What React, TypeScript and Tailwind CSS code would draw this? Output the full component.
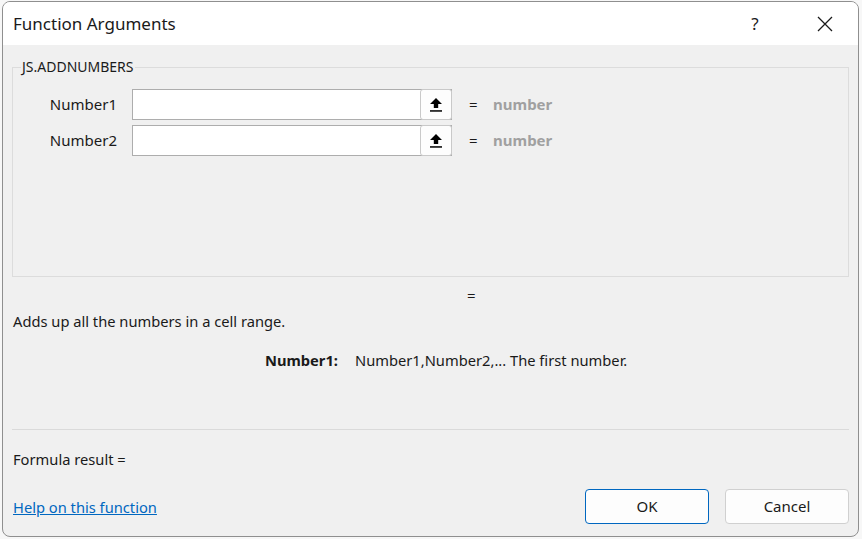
import React from 'react'

const font = { fontFamily: '"Segoe UI", "Noto Sans", Arial, sans-serif' }

function RefIcon() {
  return (
    <svg width="12" height="14" viewBox="0 0 12 14">
      <polygon points="6,0 12,6 8.2,6 8.2,10 3.8,10 3.8,6 0,6" fill="#000" />
      <rect x="0" y="12.2" width="12" height="1.5" fill="#000" />
    </svg>
  )
}

function ArgRow({ label }: { label: string }) {
  return (
    <div className="flex items-center h-[31px]">
      <div className="w-[119px] pr-[15px] text-right text-[15px] text-[#1a1a1a]">{label}</div>
      <div className="flex w-[320px] h-full border border-[#adadad] bg-white">
        <div className="flex-1" />
        <button className="w-[32px] h-[calc(100%+2px)] -mt-[1px] -mr-[1px] rounded-[3px] border border-[#c9c9c9] bg-[#fdfdfd] flex items-center justify-center">
          <RefIcon />
        </button>
      </div>
      <span className="ml-[17px] w-[8px] text-[15px] text-[#1a1a1a]">=</span>
      <span className="ml-[16px] text-[15px] font-bold text-[#a0a0a0]">number</span>
    </div>
  )
}

export default function App() {
  return (
    <div className="w-[862px] h-[539px] bg-[#f7f7f7] pt-[1px] pl-[2px]" style={font}>
      <div className="w-[857px] h-[536px] rounded-[8px] border border-[#8f8f8f] overflow-hidden flex flex-col bg-[#f0f0f0]">
        {/* title bar */}
        <div className="h-[43px] bg-white flex items-center pl-[10px] shrink-0">
          <span className="text-[17px] text-[#1a1a1a] flex-1">Function Arguments</span>
          <span className="w-[46px] text-center text-[17px] text-[#1a1a1a]">?</span>
          <span className="w-[46px] ml-[24px] mr-[10px] flex items-center justify-center">
            <svg width="16" height="16" viewBox="0 0 16 16">
              <path d="M1 1 L15 15 M15 1 L1 15" stroke="#1a1a1a" strokeWidth="1.3" />
            </svg>
          </span>
        </div>

        {/* body */}
        <div className="flex-1 flex flex-col px-[9px]">
          <fieldset className="mt-[12px] h-[220px] border border-[#dcdcdc] px-0">
            <legend className="ml-[8px] px-[1px] text-[14px] leading-[20px] text-[#1a1a1a]">JS.ADDNUMBERS</legend>
            <div className="mt-[12px] flex flex-col gap-[5px]">
              <ArgRow label="Number1" />
              <ArgRow label="Number2" />
            </div>
          </fieldset>

          <div className="h-[36px] flex items-center">
            <span className="ml-[455px] text-[15px] text-[#1a1a1a]">=</span>
          </div>
          <div className="-mt-[2px] pl-[1px] text-[14.7px] leading-[20px] text-[#1a1a1a]">Adds up all the numbers in a cell range.</div>

          <div className="mt-[19px] flex text-[14.7px] leading-[20px] text-[#1a1a1a]">
            <span className="ml-[253px] w-[90px] font-bold">Number1:</span>
            <span>Number1,Number2,... The first number.</span>
          </div>

          <div className="mt-[59px] border-t border-[#dadada]" />

          <div className="mt-[19px] pl-[1px] text-[14.7px] leading-[20px] text-[#1a1a1a]">Formula result =</div>

          <div className="mt-[20px] flex items-center">
            <a className="mt-[2px] pl-[1px] text-[14.7px] text-[#0067c0] underline flex-1">Help on this function</a>
            <button className="w-[124px] h-[35px] rounded-[4px] border border-[#0067c0] bg-[#fdfdfd] text-[15px] text-[#1a1a1a]">OK</button>
            <button className="ml-[16px] w-[124px] h-[35px] rounded-[4px] border border-[#d0d0d0] bg-[#fdfdfd] text-[15px] text-[#1a1a1a]">Cancel</button>
          </div>
        </div>
      </div>
    </div>
  )
}
